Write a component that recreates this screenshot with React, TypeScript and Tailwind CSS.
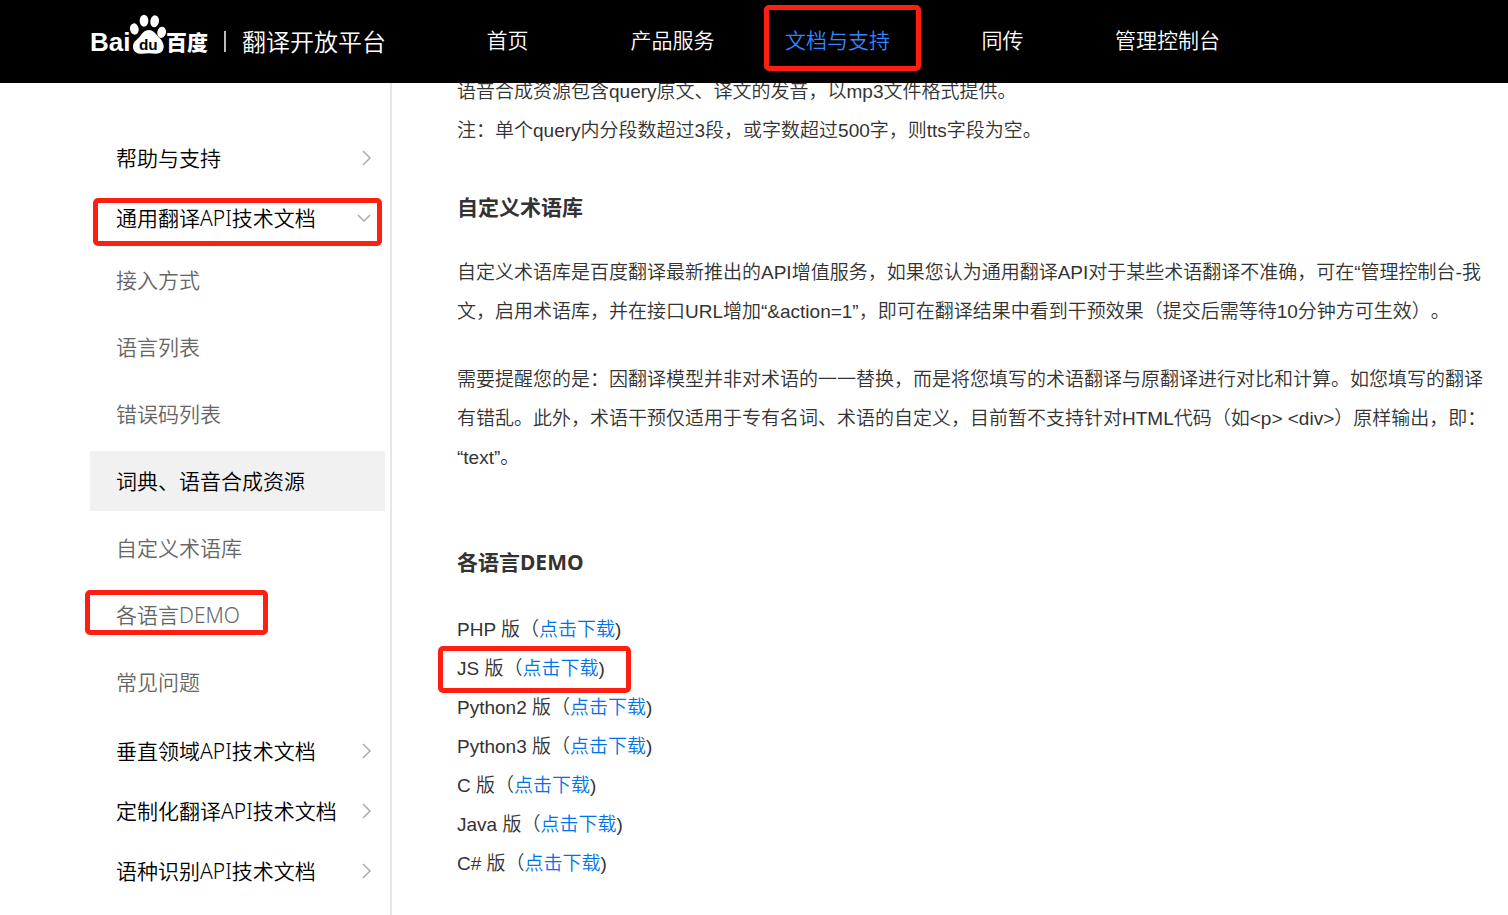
import type { ReactNode } from "react";

const navItems = [
  { label: "首页", href: "#home" },
  { label: "产品服务", href: "#products" },
  { label: "文档与支持", href: "#docs", active: true, marked: true },
  { label: "同传", href: "#interpreting" },
  { label: "管理控制台", href: "#console" },
];

const docItems = [
  { label: "接入方式", href: "#access" },
  { label: "语言列表", href: "#languages" },
  { label: "错误码列表", href: "#errors" },
  { label: "词典、语音合成资源", href: "#tts", active: true },
  { label: "自定义术语库", href: "#terms" },
  { label: "各语言DEMO", href: "#demo", marked: true },
  { label: "常见问题", href: "#faq" },
];

const otherGroups = [
  "垂直领域API技术文档",
  "定制化翻译API技术文档",
  "语种识别API技术文档",
];

const demos = [
  { name: "PHP" },
  { name: "JS", marked: true },
  { name: "Python2" },
  { name: "Python3" },
  { name: "C" },
  { name: "Java" },
  { name: "C#" },
];

// Red frame laid over an item
function Marker({ className }: { className: string }) {
  return (
    <span
      className={`absolute border-5 border-[#ff1f12] rounded-[5px] pointer-events-none ${className}`}
    />
  );
}

function Logo() {
  return (
    <a href="#home" className="flex items-center h-full text-white">
      <span className="w-10 text-[26px] leading-[30px] font-bold font-['Liberation_Sans',sans-serif]">
        Bai
      </span>
      <svg viewBox="150 40 108 120" className="w-9 h-10 mb-4">
        <g fill="#fff">
          <ellipse cx="163" cy="85" rx="13" ry="17" transform="rotate(-10 163 85)" />
          <ellipse cx="192" cy="60" rx="13" ry="18" />
          <ellipse cx="224" cy="62" rx="13" ry="18" transform="rotate(10 224 62)" />
          <ellipse cx="245" cy="95" rx="13" ry="17" transform="rotate(10 245 95)" />
          <path d="M206 88c13 0 20 10 27 18s19 17 18 34c-1 15-14 20-25 19-13-2-27-2-39 0-12 1-27-3-28-20-1-15 12-22 19-30s14-21 28-21z" />
        </g>
        <text
          x="205"
          y="149"
          textAnchor="middle"
          fill="#000"
          className="text-[46px] font-bold font-['Liberation_Sans',sans-serif]"
        >
          du
        </text>
      </svg>
      <span className="text-[21px] leading-[30px] font-black">百度</span>
      <span className="w-0.5 h-[21px] mx-4 bg-[#bbb]" />
      <span className="text-[24px] leading-[30px]">翻译开放平台</span>
    </a>
  );
}

function Chevron({ open }: { open?: boolean }) {
  return (
    <svg
      viewBox={open ? "0 0 14 9" : "0 0 9 16"}
      className={open ? "w-3.5 h-[9px]" : "w-[9px] h-4"}
      fill="none"
      stroke="#aaa"
      strokeWidth="1.5"
    >
      <path d={open ? "M1 1l6 6 6-6" : "M1 1l7 7-7 7"} />
    </svg>
  );
}

function Group({ label, open, children }: { label: string; open?: boolean; children?: ReactNode }) {
  return (
    <button
      aria-expanded={!!open}
      className="relative flex w-full h-[60px] items-center justify-between pl-[26px] pr-3.5 text-black"
    >
      {label}
      <Chevron open={open} />
      {children}
    </button>
  );
}

export default function App() {
  return (
    <div className="flex flex-col min-h-screen overflow-x-hidden bg-white font-[350] font-['Noto_Sans','Noto_Sans_CJK_SC',sans-serif]">
      <header className="relative z-10 flex h-[83px] shrink-0 bg-black pl-[90px]">
        <div className="w-[335px] shrink-0">
          <Logo />
        </div>
        <nav className="flex">
          {navItems.map((item) => (
            <a
              key={item.href}
              href={item.href}
              className={`relative flex w-[165px] items-center justify-center pb-1 text-[21px] leading-[30px] whitespace-nowrap ${
                item.active ? "text-[#3385ff]" : "text-white"
              }`}
            >
              {item.label}
              {item.marked && <Marker className="left-[9px] -right-px top-[5px] bottom-3" />}
            </a>
          ))}
        </nav>
      </header>

      <div className="flex flex-1">
        <aside className="w-[392px] shrink-0 border-r-2 border-[#e5e5e5] pl-[90px] pr-[5px] pt-[45px] text-[21px] leading-[30px]">
          <Group label="帮助与支持" />
          <Group label="通用翻译API技术文档" open>
            <Marker className="inset-x-[3px] top-2.5 bottom-0.5" />
          </Group>
          <nav className="flex flex-col gap-[7px] pt-0.5 pb-[9px]">
            {docItems.map((item) => (
              <a
                key={item.href}
                href={item.href}
                className={`relative flex h-[60px] items-center pl-[26px] ${
                  item.active ? "bg-[#f1f1f1] text-black" : "text-[#666]"
                }`}
              >
                {item.label}
                {item.marked && <Marker className="-left-[5px] top-[5px] w-[183px] h-[45px]" />}
              </a>
            ))}
          </nav>
          {otherGroups.map((label) => (
            <Group key={label} label={label} />
          ))}
        </aside>

        <main className="-mt-[11px] min-w-0 flex-1 overflow-hidden pl-[65px] text-[19px] leading-[39px] whitespace-nowrap text-[#333] [text-spacing-trim:space-all] font-['Liberation_Sans','Noto_Sans_CJK_SC',sans-serif]">
          <p>
            语音合成资源包含query原文、译文的发音，以mp3文件格式提供。
            <br />
            注：单个query内分段数超过3段，或字数超过500字，则tts字段为空。
          </p>

          <h2 className="mt-[38px] mb-[26px] text-[21px] font-bold font-['Noto_Sans','Noto_Sans_CJK_SC',sans-serif]">
            自定义术语库
          </h2>
          <p>
            自定义术语库是百度翻译最新推出的API增值服务，如果您认为通用翻译API对于某些术语翻译不准确，可在“管理控制台-我
            <br />
            文，启用术语库，并在接口URL增加“&amp;action=1”，即可在翻译结果中看到干预效果（提交后需等待10分钟方可生效）。
          </p>
          <p className="mt-[29px]">
            需要提醒您的是：因翻译模型并非对术语的一一替换，而是将您填写的术语翻译与原翻译进行对比和计算。如您填写的翻译
            <br />
            有错乱。此外，术语干预仅适用于专有名词、术语的自定义，目前暂不支持针对HTML代码（如&lt;p&gt; &lt;div&gt;）原样输出，即：
            <br />
            “text”。
          </p>

          <h2 className="mt-[66px] mb-7 text-[21px] font-bold font-['Noto_Sans','Noto_Sans_CJK_SC',sans-serif]">
            各语言DEMO
          </h2>
          <ul>
            {demos.map((demo) => (
              <li key={demo.name} className="relative h-[39px]">
                {demo.name} 版（
                <a href="#download" className="text-[#0073eb]">
                  点击下载
                </a>
                )
                {demo.marked && <Marker className="-left-[19px] -top-[3px] w-[193px] h-[47px]" />}
              </li>
            ))}
          </ul>
        </main>
      </div>
    </div>
  );
}
